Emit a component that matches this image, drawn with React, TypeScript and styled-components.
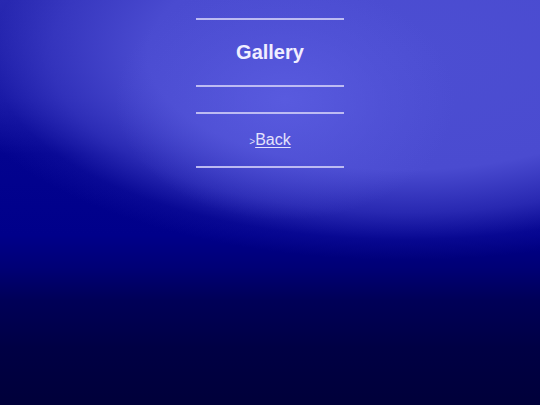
import React from 'react';
import styled, { createGlobalStyle } from 'styled-components';

const GlobalStyle = createGlobalStyle`
    html, body {
        margin: 0;
        padding: 0;
        height: 100%;
    }
    #root {
        height: 100%;
    }
`;

const Page = styled.div`
    min-height: 405px;
    height: 100%;
    font-family: "Liberation Sans", Arial, sans-serif;
    color: #eceaff;
    background:
        radial-gradient(ellipse 170px 120px at 285px 100px, rgba(92, 94, 226, 0.8) 0%, rgba(88, 90, 222, 0.35) 60%, rgba(80, 80, 214, 0) 100%),
        radial-gradient(ellipse 460px 205px at 405px 55px, #4c4ed2 0%, #4a4bd0 56%, rgba(66, 66, 202, 0.6) 77%, rgba(40, 40, 180, 0.2) 90%, rgba(30, 30, 170, 0) 100%),
        linear-gradient(to bottom, #2828b0 0%, #1616a2 25%, #03038f 38%, #00008a 58%, #000076 66%, #000058 74%, #000044 86%, #00003a 100%);
    display: flex;
    justify-content: center;
`;

const Column = styled.nav`
    width: 148px;
    display: flex;
    flex-direction: column;
    align-items: stretch;
    padding-top: 18px;
`;

const Rule = styled.hr<{ $after: number }>`
    border: none;
    height: 2px;
    margin: 0 0 ${(p) => p.$after}px;
    background: #c9c6f5;
    opacity: 0.9;
`;

const Title = styled.h1`
    margin: 0;
    height: 65px;
    display: flex;
    align-items: center;
    justify-content: center;
    font-size: 20px;
    font-weight: bold;
    color: #f0eeff;
`;

const LinkRow = styled.div`
    height: 52px;
    display: flex;
    align-items: center;
    justify-content: center;
    font-size: 16px;
`;

const Arrow = styled.span`
    font-size: 10px;
    color: #dcdaf8;
    margin-top: 3px;
`;

const BackLink = styled.a`
    color: #e4e2fc;
    text-decoration: underline;
    text-underline-offset: 2px;
`;

const App = () => {
    return (
        <>
            <GlobalStyle />
            <Page>
                <Column>
                    <Rule $after={0} />
                    <Title>Gallery</Title>
                    <Rule $after={25} />
                    <Rule $after={0} />
                    <LinkRow>
                        <Arrow>&gt;</Arrow>
                        <BackLink href="#">Back</BackLink>
                    </LinkRow>
                    <Rule $after={0} />
                </Column>
            </Page>
        </>
    );
};

export default App;
